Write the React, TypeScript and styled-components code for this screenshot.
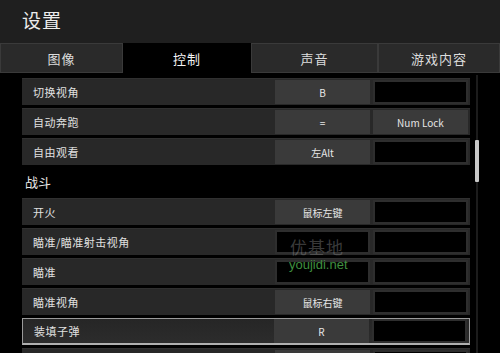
import React from "react";
import styled, { createGlobalStyle } from "styled-components";

const GlobalStyle = createGlobalStyle`
  html, body {
    margin: 0;
    padding: 0;
    background: #000;
    overflow: hidden;
  }
  body {
    font-family: "Noto Sans CJK SC", "Noto Sans", sans-serif;
  }
`;

const Screen = styled.div`
  width: 500px;
  height: 353px;
  background: #000;
  display: flex;
  flex-direction: column;
  overflow: hidden;
  position: relative;
`;

const Header = styled.div`
  height: 43px;
  flex-shrink: 0;
  background: #1f1f1f;
  display: flex;
  align-items: center;
  padding-left: 22px;
  box-sizing: border-box;
`;

const Title = styled.h1`
  margin: 0;
  font-size: 19px;
  font-weight: 400;
  color: #ececec;
  letter-spacing: 1px;
  margin-top: -4px;
`;

const TabBar = styled.div`
  height: 30px;
  flex-shrink: 0;
  display: grid;
  grid-template-columns: 123px 128px 127px 1fr;
  background: #000;
`;

const Tab = styled.div<{ $active?: boolean }>`
  display: flex;
  align-items: center;
  justify-content: center;
  font-size: 13px;
  color: ${(p) => (p.$active ? "#f4f4f4" : "#dcdcdc")};
  background: ${(p) => (p.$active ? "#000" : "#2a2a2a")};
  border: 1px solid ${(p) => (p.$active ? "#000" : "#3a3a3a")};
  box-sizing: border-box;
  letter-spacing: 1px;
`;

const Body = styled.div`
  flex: 1;
  display: flex;
  min-height: 0;
`;

const List = styled.div`
  width: 448px;
  margin-left: 22px;
  padding-top: 5px;
  display: flex;
  flex-direction: column;
  gap: 3px;
`;

const Row = styled.div<{ $focused?: boolean }>`
  height: 27px;
  flex-shrink: 0;
  display: flex;
  align-items: center;
  gap: 3px;
  padding-right: 2px;
  box-sizing: border-box;
  background: ${(p) =>
    p.$focused ? "linear-gradient(#262626, #2c2c2c)" : "#282828"};
  border: ${(p) => (p.$focused ? "1px solid #9a9a9a" : "none")};
  border-top: ${(p) => (p.$focused ? "1px solid #9a9a9a" : "1px solid #303030")};
  border-bottom: ${(p) => (p.$focused ? "2px solid #b0b0b0" : "none")};
`;

const Label = styled.div`
  flex: 1;
  padding-left: 11px;
  font-size: 11px;
  color: #e0e0e0;
  letter-spacing: 0.5px;
`;

const KeyCell = styled.div<{ $empty?: boolean }>`
  width: 95px;
  height: 24px;
  box-sizing: border-box;
  display: flex;
  align-items: center;
  justify-content: center;
  font-size: 10px;
  color: #e6e6e6;
  background: ${(p) => (p.$empty ? "#000" : "#3a3a3a")};
  border: 2px solid ${(p) => (p.$empty ? "#2e2e2e" : "#3a3a3a")};
`;

const Section = styled.div`
  height: 27px;
  flex-shrink: 0;
  display: flex;
  align-items: center;
  padding-left: 3px;
  font-size: 13px;
  color: #e8e8e8;
`;

const ScrollTrack = styled.div`
  position: relative;
  width: 2px;
  margin-left: 6px;
  margin-top: 2px;
  background: #1c1c1c;
`;

const ScrollThumb = styled.div`
  position: absolute;
  left: -1px;
  top: 65px;
  width: 4px;
  height: 42px;
  background: #c8c8c8;
  border-radius: 1px;
`;

const Watermark = styled.div`
  position: absolute;
  left: 289px;
  top: 238px;
  display: flex;
  flex-direction: column;
  align-items: flex-start;
  gap: 2px;
  pointer-events: none;
`;

const MarkCn = styled.div`
  font-size: 17px;
  color: rgba(150, 150, 150, 0.4);
  letter-spacing: 1px;
  line-height: 18px;
  padding-left: 1px;
`;

const MarkEn = styled.div`
  font-family: "Liberation Sans", Arial, sans-serif;
  font-size: 13px;
  color: #3f8f3f;
  line-height: 14px;
`;

type Binding = { label: string; a?: string; b?: string; focused?: boolean };

const movement: Binding[] = [
  { label: "切换视角", a: "B" },
  { label: "自动奔跑", a: "=", b: "Num Lock" },
  { label: "自由观看", a: "左Alt" },
];

const combat: Binding[] = [
  { label: "开火", a: "鼠标左键" },
  { label: "瞄准/瞄准射击视角" },
  { label: "瞄准" },
  { label: "瞄准视角", a: "鼠标右键" },
  { label: "装填子弹", a: "R", focused: true },
  { label: "", a: " " },
];

const tabs = ["图像", "控制", "声音", "游戏内容"];

function BindingRow({ item }: { item: Binding }) {
  return (
    <Row $focused={item.focused}>
      <Label>{item.label}</Label>
      <KeyCell $empty={!item.a}>{item.a}</KeyCell>
      <KeyCell $empty={!item.b}>{item.b}</KeyCell>
    </Row>
  );
}

export default function App() {
  return (
    <Screen>
      <GlobalStyle />
      <Header>
        <Title>设置</Title>
      </Header>
      <TabBar>
        {tabs.map((t) => (
          <Tab key={t} $active={t === "控制"}>
            {t}
          </Tab>
        ))}
      </TabBar>
      <Body>
        <List>
          {movement.map((m) => (
            <BindingRow key={m.label} item={m} />
          ))}
          <Section>战斗</Section>
          {combat.map((m, i) => (
            <BindingRow key={i} item={m} />
          ))}
        </List>
        <ScrollTrack>
          <ScrollThumb />
        </ScrollTrack>
      </Body>
      <Watermark>
        <MarkCn>优基地</MarkCn>
        <MarkEn>youjidi.net</MarkEn>
      </Watermark>
    </Screen>
  );
}
